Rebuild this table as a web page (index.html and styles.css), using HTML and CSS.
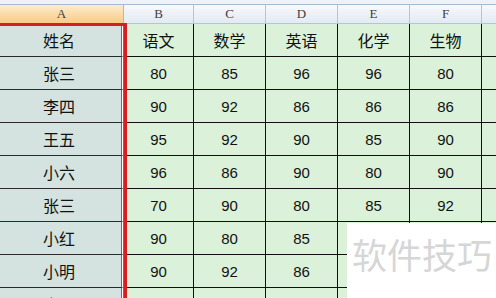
FILE: index.html
```html
<!DOCTYPE html>
<html>
<head>
<meta charset="utf-8">
<link rel="stylesheet" href="styles.css">
</head>
<body>
<div class="page">
  <div class="topbar"></div>
  <div class="sheet">
    <div class="hd hd-a">A</div>
    <div class="hd">B</div>
    <div class="hd">C</div>
    <div class="hd">D</div>
    <div class="hd">E</div>
    <div class="hd">F</div>
    <div class="hd hd-last"></div>

    <div class="c a">姓名</div><div class="c">语文</div><div class="c">数学</div><div class="c">英语</div><div class="c">化学</div><div class="c">生物</div><div class="c g"></div>
    <div class="c a">张三</div><div class="c n">80</div><div class="c n">85</div><div class="c n">96</div><div class="c n">96</div><div class="c n">80</div><div class="c g"></div>
    <div class="c a">李四</div><div class="c n">90</div><div class="c n">92</div><div class="c n">86</div><div class="c n">86</div><div class="c n">86</div><div class="c g"></div>
    <div class="c a">王五</div><div class="c n">95</div><div class="c n">92</div><div class="c n">90</div><div class="c n">85</div><div class="c n">90</div><div class="c g"></div>
    <div class="c a">小六</div><div class="c n">96</div><div class="c n">86</div><div class="c n">90</div><div class="c n">80</div><div class="c n">90</div><div class="c g"></div>
    <div class="c a">张三</div><div class="c n">70</div><div class="c n">90</div><div class="c n">80</div><div class="c n">85</div><div class="c n">92</div><div class="c g"></div>
    <div class="c a">小红</div><div class="c n">90</div><div class="c n">80</div><div class="c n">85</div><div class="c n"></div><div class="c n"></div><div class="c g"></div>
    <div class="c a">小明</div><div class="c n">90</div><div class="c n">92</div><div class="c n">86</div><div class="c n"></div><div class="c n"></div><div class="c g"></div>
    <div class="c a">张飞</div><div class="c n"></div><div class="c n"></div><div class="c n"></div><div class="c n"></div><div class="c n"></div><div class="c g"></div>
  </div>
  <div class="selection"></div>
  <div class="watermark">软件技巧</div>
</div>
</body>
</html>
```

FILE: styles.css
```css
html, body {
  margin: 0;
  padding: 0;
  background: #ffffff;
}

.page {
  position: relative;
  width: 496px;
  height: 298px;
  overflow: hidden;
  background: #ffffff;
}

.topbar {
  height: 4px;
  background: #eef1f5;
  border-bottom: 1px solid #a9bccf;
}

.sheet {
  display: grid;
  grid-template-columns: 124px 70px 72px 72px 72px 72px 1fr;
  grid-auto-rows: 33px;
  grid-template-rows: 19px;
  background: #ffffff;
  font-family: "Noto Sans CJK SC", "Liberation Sans", sans-serif;
}

.hd {
  box-sizing: border-box;
  display: flex;
  align-items: center;
  justify-content: center;
  background: linear-gradient(#f7f9fc, #e3eaf3);
  border-right: 1px solid #b3c4d6;
  border-bottom: 1px solid #b3c4d6;
  font-family: "Liberation Serif", "DejaVu Serif", serif;
  font-size: 13px;
  color: #3c3c3c;
}

.hd-a {
  background: linear-gradient(#fdeccd, #f8cb86);
  border-right: 1px solid #c9b48e;
  border-bottom: 1px solid #e7a94f;
}

.hd-last {
  border-right: none;
}

.c {
  box-sizing: border-box;
  display: flex;
  align-items: center;
  justify-content: center;
  background: #dbf1da;
  border-right: 1px solid #101010;
  border-bottom: 1px solid #101010;
  font-size: 16px;
  color: #111111;
}

.c.n {
  font-family: "Liberation Sans", Arial, sans-serif;
  font-size: 15px;
}

.c.a {
  background: #d4e3df;
  background-clip: padding-box;
  border-right: 3px double #6f6f6f;
  border-bottom: 1px solid #2a2a2a;
  padding-right: 3px;
}

.c.g {
  border-right: none;
}

.selection {
  position: absolute;
  left: 0;
  top: 23px;
  width: 124px;
  height: 300px;
  border-top: 3px solid #d81e1e;
  border-right: 3px solid #d81e1e;
  pointer-events: none;
}

.watermark {
  position: absolute;
  left: 347px;
  top: 223px;
  right: 0;
  bottom: 0;
  background: #ffffff;
  padding: 11px 0 0 5px;
  font-family: "Noto Sans CJK SC", sans-serif;
  font-size: 35px;
  line-height: 40px;
  color: #d6d6d6;
  white-space: nowrap;
}
```
